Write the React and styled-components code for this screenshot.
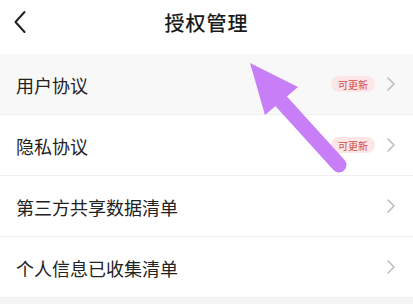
import React from 'react';
import styled, { createGlobalStyle } from 'styled-components';

const GlobalStyle = createGlobalStyle`
  html, body {
    margin: 0;
    padding: 0;
    background: #f4f4f4;
  }
  body {
    font-family: "Noto Sans CJK SC", "Noto Sans", sans-serif;
    color: #222;
  }
`;

const Page = styled.div`
  position: relative;
  width: 413px;
  height: 304px;
  overflow: hidden;
  background: #f4f4f4;
`;

const Header = styled.div`
  height: 54px;
  display: flex;
  align-items: center;
  justify-content: center;
  position: relative;
  background: #fff;
`;

const BackButton = styled.div`
  position: absolute;
  left: 13px;
  top: 10px;
  width: 16px;
  height: 24px;
  display: flex;
  align-items: center;
`;

const Title = styled.h1`
  margin: 0 0 10px;
  font-size: 20px;
  font-weight: 500;
  letter-spacing: 1px;
  color: #1a1a1a;
`;

const List = styled.div`
  display: flex;
  flex-direction: column;
`;

const Row = styled.div`
  height: 61px;
  box-sizing: border-box;
  display: flex;
  align-items: center;
  padding: 0 17px 0 16px;
  background: ${p => (p.active ? '#f8f8f8' : '#fff')};
  border-bottom: 1px solid #efefef;
`;

const Label = styled.span`
  flex: 1;
  font-size: 18px;
  color: #222;
  padding-top: 2px;
`;

const Badge = styled.span`
  display: flex;
  align-items: center;
  justify-content: center;
  height: 16px;
  width: 44px;
  border-radius: 8px;
  background: #fde6e6;
  color: #d24b4b;
  font-size: 10px;
  margin-right: 11px;
`;

const Chevron = styled.svg`
  width: 10px;
  height: 16px;
  flex: none;
`;

const Arrow = styled.svg`
  position: absolute;
  left: 0;
  top: 0;
  pointer-events: none;
`;

const items = [
  { id: 1, text: '用户协议', update: true, active: true },
  { id: 2, text: '隐私协议', update: true },
  { id: 3, text: '第三方共享数据清单' },
  { id: 4, text: '个人信息已收集清单' },
];

export default function App() {
  return (
    <Page>
      <GlobalStyle />
      <Header>
        <BackButton>
          <svg width="14" height="24" viewBox="0 0 14 24">
            <path d="M11.5 2 L2.5 12 L11.5 22" fill="none" stroke="#222" strokeWidth="2" strokeLinecap="round" strokeLinejoin="round" />
          </svg>
        </BackButton>
        <Title>授权管理</Title>
      </Header>
      <List>
        {items.map(item => (
          <Row key={item.id} active={item.active}>
            <Label>{item.text}</Label>
            {item.update && <Badge>可更新</Badge>}
            <Chevron viewBox="0 0 10 16">
              <path d="M2 2 L8 8 L2 14" fill="none" stroke="#bdbdbd" strokeWidth="1.6" strokeLinecap="round" strokeLinejoin="round" />
            </Chevron>
          </Row>
        ))}
      </List>
      <Arrow width="413" height="304" viewBox="0 0 413 304">
        <line x1="280" y1="100" x2="339" y2="165" stroke="#c77ef6" strokeWidth="15" strokeLinecap="round" />
        <polygon points="250,63 298,87 265,115" fill="#c77ef6" />
      </Arrow>
    </Page>
  );
}
